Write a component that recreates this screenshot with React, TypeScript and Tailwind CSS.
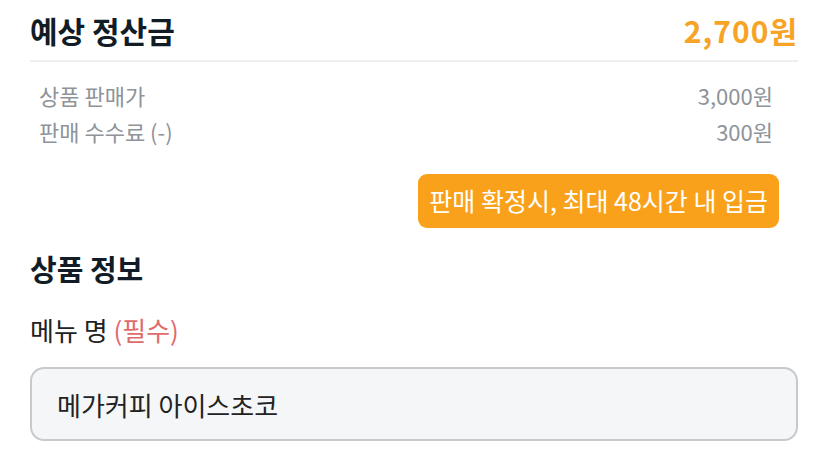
import React from "react";

const font = { fontFamily: '"Noto Sans CJK KR", "Noto Sans", sans-serif' };

const PriceRow = ({ label, value }: { label: string; value: string }) => (
  <div className="flex items-center justify-between text-[22px] leading-[36px] text-[#8e9399]">
    <span>{label}</span>
    <span>{value}</span>
  </div>
);

const App = () => {
  return (
    <div className="w-[828px] h-[455px] overflow-hidden bg-white px-[30px]" style={font}>
      <div className="flex h-[62px] items-center justify-between border-b-2 border-[#eeeeee]">
        <h2 className="text-[30px] font-bold text-[#111c27]">예상 정산금</h2>
        <span className="text-[30px] font-bold tracking-[1px] text-[#f7a325]">2,700원</span>
      </div>

      <div className="pl-[9px] pr-[25px] pt-[15px]">
        <PriceRow label="상품 판매가" value="3,000원" />
        <PriceRow label="판매 수수료 (-)" value="300원" />
      </div>

      <div className="mt-[25px] flex justify-end pr-[19px]">
        <div className="flex h-[54px] items-center rounded-[9px] bg-[#f9a11b] px-[11px] text-[25px] text-white">
          판매 확정시, 최대 48시간 내 입금
        </div>
      </div>

      <h3 className="mt-[22px] text-[29px] font-bold leading-[36px] text-[#111c27]">상품 정보</h3>

      <div className="mt-[28px] text-[26px] leading-[32px] text-[#222]">
        메뉴 명 <span className="text-[#e06b6b]">(필수)</span>
      </div>

      <div className="mt-[21px] flex h-[74px] items-center rounded-[14px] border-2 border-[#c6cacf] bg-[#f5f6f8] px-[25px] text-[26px] text-[#222]">
        메가커피 아이스초코
      </div>
    </div>
  );
};

export default App;
